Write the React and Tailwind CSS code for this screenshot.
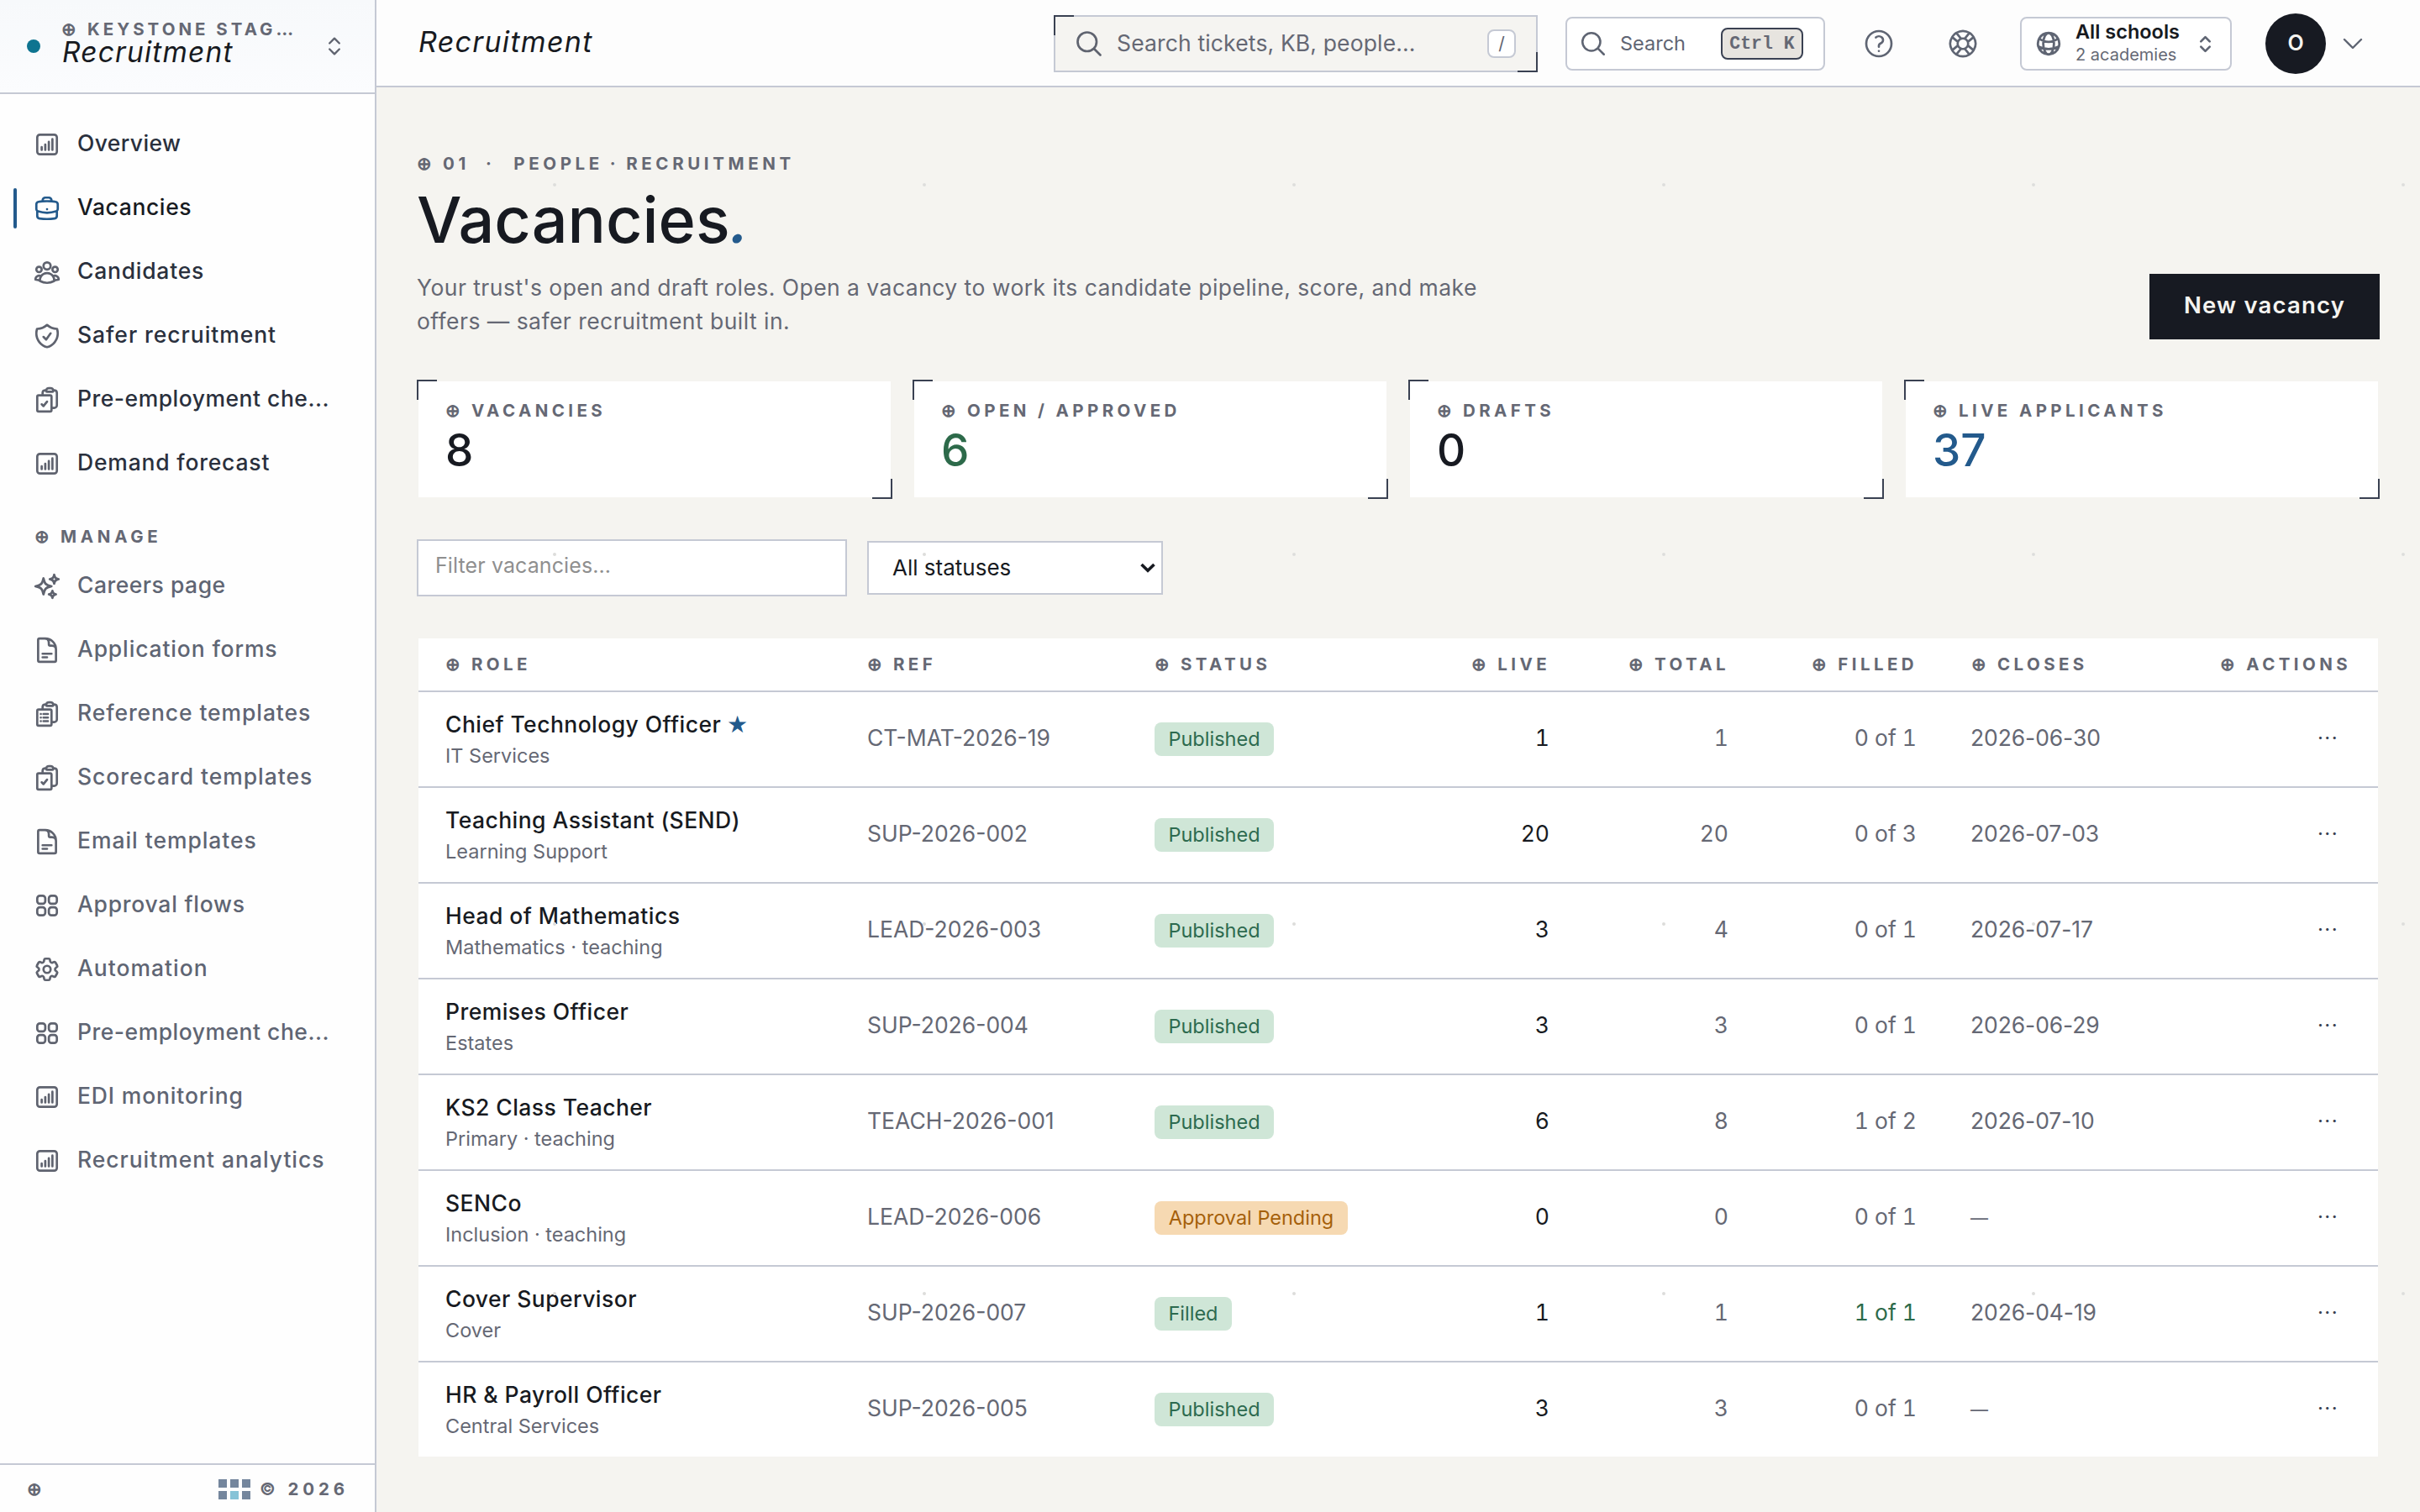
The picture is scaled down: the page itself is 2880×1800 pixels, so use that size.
import React from 'react'
import {
  HiOutlineChartBarSquare,
  HiOutlineBriefcase,
  HiOutlineUserGroup,
  HiOutlineShieldCheck,
  HiOutlineClipboardDocumentCheck,
  HiOutlineClipboardDocumentList,
  HiOutlineSparkles,
  HiOutlineDocumentText,
  HiOutlineSquares2X2,
  HiOutlineCog6Tooth,
  HiOutlineMagnifyingGlass,
  HiOutlineQuestionMarkCircle,
  HiOutlineLifebuoy,
  HiOutlineGlobeAlt,
  HiOutlineChevronDown,
} from 'react-icons/hi2'
import { ChevronsUpDown } from 'lucide-react'

const mainNav = [
  { label: 'Overview', icon: HiOutlineChartBarSquare, track: 'tracking-[0.4px]' },
  { label: 'Vacancies', icon: HiOutlineBriefcase, track: 'tracking-[0.6px]', active: true },
  { label: 'Candidates', icon: HiOutlineUserGroup, track: 'tracking-[0.75px]' },
  { label: 'Safer recruitment', icon: HiOutlineShieldCheck, track: 'tracking-[0.95px]' },
  { label: 'Pre-employment che...', icon: HiOutlineClipboardDocumentCheck, track: 'tracking-[0.5px]' },
  { label: 'Demand forecast', icon: HiOutlineChartBarSquare, track: 'tracking-[0.8px]' },
]

const manageNav = [
  { label: 'Careers page', icon: HiOutlineSparkles, track: 'tracking-[0.5px]' },
  { label: 'Application forms', icon: HiOutlineDocumentText, track: 'tracking-[0.85px]' },
  { label: 'Reference templates', icon: HiOutlineClipboardDocumentList, track: 'tracking-[0.9px]' },
  { label: 'Scorecard templates', icon: HiOutlineClipboardDocumentCheck, track: 'tracking-[0.95px]' },
  { label: 'Email templates', icon: HiOutlineDocumentText, track: 'tracking-[0.95px]' },
  { label: 'Approval flows', icon: HiOutlineSquares2X2, track: 'tracking-[0.75px]' },
  { label: 'Automation', icon: HiOutlineCog6Tooth, track: 'tracking-[1px]' },
  { label: 'Pre-employment che...', icon: HiOutlineSquares2X2, track: 'tracking-[0.5px]' },
  { label: 'EDI monitoring', icon: HiOutlineChartBarSquare, track: 'tracking-[0.85px]' },
  { label: 'Recruitment analytics', icon: HiOutlineChartBarSquare, track: 'tracking-[0.95px]' },
]

const stats = [
  { label: 'VACANCIES', value: '8', tone: 'text-[#171a21]' },
  { label: 'OPEN / APPROVED', value: '6', tone: 'text-[#2d6a4a]' },
  { label: 'DRAFTS', value: '0', tone: 'text-[#171a21]' },
  { label: 'LIVE APPLICANTS', value: '37', tone: 'text-[#235a8c]' },
]

const rows = [
  { role: 'Chief Technology Officer', star: true, dept: 'IT Services', ref: 'CT-MAT-2026-19', status: 'Published', live: 1, total: 1, filled: '0 of 1', closes: '2026-06-30' },
  { role: 'Teaching Assistant (SEND)', dept: 'Learning Support', ref: 'SUP-2026-002', status: 'Published', live: 20, total: 20, filled: '0 of 3', closes: '2026-07-03' },
  { role: 'Head of Mathematics', dept: 'Mathematics · teaching', ref: 'LEAD-2026-003', status: 'Published', live: 3, total: 4, filled: '0 of 1', closes: '2026-07-17' },
  { role: 'Premises Officer', dept: 'Estates', ref: 'SUP-2026-004', status: 'Published', live: 3, total: 3, filled: '0 of 1', closes: '2026-06-29' },
  { role: 'KS2 Class Teacher', dept: 'Primary · teaching', ref: 'TEACH-2026-001', status: 'Published', live: 6, total: 8, filled: '1 of 2', closes: '2026-07-10' },
  { role: 'SENCo', dept: 'Inclusion · teaching', ref: 'LEAD-2026-006', status: 'Approval Pending', live: 0, total: 0, filled: '0 of 1', closes: null },
  { role: 'Cover Supervisor', dept: 'Cover', ref: 'SUP-2026-007', status: 'Filled', live: 1, total: 1, filled: '1 of 1', closes: '2026-04-19', done: true },
  { role: 'HR & Payroll Officer', dept: 'Central Services', ref: 'SUP-2026-005', status: 'Published', live: 3, total: 3, filled: '0 of 1', closes: null },
]

const badge = {
  Published: 'w-[142px] bg-[#cfe6d7] text-[#2d6a4f]',
  Filled: 'w-[92px] bg-[#cfe6d7] text-[#2d6a4f]',
  'Approval Pending': 'w-[230px] bg-[#f6d9b2] text-[#a5600a]',
}

function Label({ children, track = 'tracking-[4.4px]', className = '' }) {
  return (
    <span className={`inline-flex items-center text-[20.5px] leading-[24px] font-bold whitespace-nowrap text-[#656874] ${track} ${className}`}>
      <span className="-ml-[1px] w-[31px] shrink-0 text-left font-['Roboto'] tracking-normal">⊕</span>
      {children}
    </span>
  )
}

function NavItem({ item, muted }) {
  const Icon = item.icon
  return (
    <a className="relative flex h-[72px] items-center gap-[19px] pl-[39px]">
      {item.active && <span className="absolute top-[12px] left-[16px] h-[48px] w-[4px] rounded-full bg-[#235a8c]" />}
      <Icon strokeWidth={1.9} className={`size-[34px] shrink-0 ${item.active ? 'text-[#235a8c]' : 'text-[#5f636f]'}`} />
      <span
        className={`pb-[4px] text-[26.5px] leading-[36px] font-medium whitespace-nowrap ${item.track} ${
          muted ? 'text-[#5f6573]' : item.active ? 'text-[#171a21]' : 'text-[#2a303d]'
        }`}
      >
        {item.label}
      </span>
    </a>
  )
}

function Sidebar() {
  return (
    <aside className="flex w-[448px] shrink-0 flex-col border-r-2 border-[#c5c9d4] bg-[#fefefe]">
      <div className="flex h-[112px] shrink-0 items-center border-b-2 border-[#c5c9d4] bg-gradient-to-b from-[#f7f9fb] to-[#fbfcfe] pr-[34px] pl-[32px]">
        <span className="size-[16px] shrink-0 rounded-full bg-[#0e7490]" />
        <div className="ml-[26px] flex grow flex-col pb-[10px]">
          <Label track="tracking-[4px]">KEYSTONE STAG…</Label>
          <span className="text-[33.5px] leading-[31px] tracking-[1.2px] text-[#171a21] italic">Recruitment</span>
        </div>
        <ChevronsUpDown strokeWidth={2} className="size-[28px] text-[#5f636f]" />
      </div>
      <nav className="flex grow flex-col pt-[24px]">
        <div className="flex flex-col gap-[4px]">
          {mainNav.map((n) => (
            <NavItem key={n.label} item={n} />
          ))}
        </div>
        <div className="flex h-[74px] items-center pt-[28px] pl-[42px]">
          <Label track="tracking-[4.7px]">MANAGE</Label>
        </div>
        <div className="flex flex-col gap-[4px]">
          {manageNav.map((n) => (
            <NavItem key={n.label} item={n} muted />
          ))}
        </div>
      </nav>
      <div className="flex h-[58px] shrink-0 items-center justify-between border-t-2 border-[#c5c9d4] pt-[1px] pr-[31px] pl-[33px]">
        <Label />
        <div className="flex items-center gap-[11px]">
          <div className="grid grid-cols-3 gap-[4px]">
            {[0, 1, 2, 3, 4, 5].map((i) => (
              <span key={i} className={`size-[10px] ${i === 4 ? 'bg-[#86c3d7]' : 'bg-[#74869d]'}`} />
            ))}
          </div>
          <span className="text-[20.5px] leading-[24px] font-bold tracking-[4.9px] text-[#656874]">© 2026</span>
        </div>
      </div>
    </aside>
  )
}

function TopBar() {
  return (
    <header className="flex h-[104px] shrink-0 items-center border-b-2 border-[#c5c9d4] bg-[#fdfdfd] pt-[2px] pl-[50px]">
      <span className="w-[756px] pb-[4px] text-[34px] leading-[40px] tracking-[1.3px] text-[#171a21] italic">Recruitment</span>
      <div className="relative flex h-[68px] w-[576px] items-center border-2 border-[#c5c9d4] bg-[#f5f4f1] pr-[24px] pl-[22px]">
        <span className="absolute -top-[2px] -left-[2px] size-[24px] border-t-2 border-l-2 border-[#3a4152]" />
        <span className="absolute -right-[2px] -bottom-[2px] size-[24px] border-r-2 border-b-2 border-[#3a4152]" />
        <HiOutlineMagnifyingGlass strokeWidth={1.8} className="size-[36px] text-[#5f636f]" />
        <span className="ml-[15px] grow pb-[3px] text-[26.5px] leading-[36px] tracking-[0.15px] text-[#656874]">Search tickets, KB, people...</span>
        <kbd className="flex h-[34px] w-[34px] items-center justify-center rounded-[8px] border-2 border-[#c5c9d4] bg-white font-['Inter'] text-[21px] text-[#5f636f]">/</kbd>
      </div>
      <div className="ml-[33px] flex h-[64px] w-[309px] items-center rounded-[8px] border-2 border-[#c5c9d4] bg-white pr-[24px] pl-[14px]">
        <HiOutlineMagnifyingGlass strokeWidth={1.8} className="size-[34px] text-[#5f6573]" />
        <span className="ml-[15px] grow pb-[1px] text-[23.5px] leading-[32px] text-[#5f6573]">Search</span>
        <kbd className="flex h-[38px] w-[98px] items-center justify-center rounded-[8px] border-2 border-[#3a4152] bg-[#e7e4df] font-['Liberation_Mono'] text-[21.5px] font-bold text-[#656874]">Ctrl K</kbd>
      </div>
      <HiOutlineQuestionMarkCircle strokeWidth={1.6} className="ml-[44px] size-[40px] text-[#5f6573]" />
      <HiOutlineLifebuoy strokeWidth={1.6} className="ml-[60px] size-[40px] text-[#5f6573]" />
      <div className="ml-[48px] flex h-[64px] w-[252px] items-center rounded-[8px] border-2 border-[#c5c9d4] bg-white pr-[17px] pl-[15px]">
        <HiOutlineGlobeAlt strokeWidth={2} className="size-[34px] text-[#5f6573]" />
        <div className="ml-[15px] flex grow flex-col pb-[3px]">
          <span className="text-[23.5px] leading-[28px] font-semibold whitespace-nowrap text-[#171a21]">All schools</span>
          <span className="text-[20px] leading-[26px] whitespace-nowrap text-[#656874]">2 academies</span>
        </div>
        <ChevronsUpDown strokeWidth={2.6} className="size-[25px] text-[#5f6573]" />
      </div>
      <span className="ml-[40px] flex size-[72px] items-center justify-center rounded-full bg-[#171a22] pb-[1px] text-[25px] font-semibold text-[#f5f4f0]">O</span>
      <HiOutlineChevronDown strokeWidth={1.8} className="ml-[16px] size-[32px] text-[#5f6573]" />
    </header>
  )
}

function StatCard({ stat }) {
  return (
    <div className="relative h-[142px] border-2 border-transparent bg-white bg-clip-padding pt-[23px] pl-[33px]">
      <span className="absolute -top-[2px] -left-[2px] size-[24px] border-t-2 border-l-2 border-[#3a4152]" />
      <span className="absolute -right-[2px] -bottom-[2px] size-[24px] border-r-2 border-b-2 border-[#3a4152]" />
      <div className="flex h-[24px]">
        <Label>{stat.label}</Label>
      </div>
      <div className={`mt-[5px] -ml-[1px] text-[53px] leading-[60px] font-medium ${stat.tone}`}>{stat.value}</div>
    </div>
  )
}

function Vacancies() {
  return (
    <table className="mt-[50px] ml-[2px] w-[2332px] table-fixed border-collapse bg-white text-[26.5px]">
      <colgroup>
        <col className="w-[502px]" />
        <col className="w-[342px]" />
        <col className="w-[360px]" />
        <col className="w-[175px]" />
        <col className="w-[213px]" />
        <col className="w-[224px]" />
        <col className="w-[250px]" />
        <col className="w-[266px]" />
      </colgroup>
      <thead>
        <tr className="h-[63px] border-b-2 border-[#c5c9d4] text-left leading-[24px]">
          <th className="pb-[3px] pl-[33px]"><Label className="align-middle">ROLE</Label></th>
          <th className="pb-[3px] pl-[33px]"><Label className="align-middle">REF</Label></th>
          <th className="pb-[3px] pl-[33px]"><Label className="align-middle">STATUS</Label></th>
          <th className="pr-[32px] pb-[3px] text-right"><Label className="align-middle">LIVE</Label></th>
          <th className="pr-[32px] pb-[3px] text-right"><Label className="align-middle">TOTAL</Label></th>
          <th className="pr-[32px] pb-[3px] text-right"><Label className="align-middle">FILLED</Label></th>
          <th className="pb-[3px] pl-[33px]"><Label className="align-middle">CLOSES</Label></th>
          <th className="pr-[32px] pb-[3px] text-right"><Label className="align-middle">ACTIONS</Label></th>
        </tr>
      </thead>
      <tbody>
        {rows.map((r) => (
          <tr key={r.ref} className="h-[114px] border-b-2 border-[#c5c9d4] text-[#656874] last:h-[113px] last:border-b-0">
            <td className="pl-[32px]">
              <div className="leading-[38px] font-medium tracking-[0.45px] whitespace-nowrap text-[#171a21]">
                {r.role}
                {r.star && <span className="ml-[7px] font-['Roboto'] text-[28px] leading-none text-[#235a8c]">★</span>}
              </div>
              <div className="text-[23.5px] leading-[37px]">{r.dept}</div>
            </td>
            <td className="pb-[2px] pl-[32px]">{r.ref}</td>
            <td className="pl-[32px]">
              <span className={`flex h-[40px] items-center justify-center rounded-[8px] pb-[1px] text-[23.5px] whitespace-nowrap ${badge[r.status]}`}>{r.status}</span>
            </td>
            <td className="pr-[33px] pb-[2px] text-right text-[#171a21] tabular-nums">{r.live}</td>
            <td className="pr-[33px] pb-[2px] text-right tabular-nums">{r.total}</td>
            <td className={`pr-[33px] pb-[2px] text-right tabular-nums ${r.done ? 'text-[#2d6a4a]' : ''}`}>{r.filled}</td>
            <td className="pb-[2px] pl-[31px] tracking-[-0.1px]">{r.closes ?? <span className="text-[21px]">—</span>}</td>
            <td className="pr-[47px] pb-[2px] text-right text-[24px] tracking-[1.4px] text-[#3a4152]">···</td>
          </tr>
        ))}
      </tbody>
    </table>
  )
}

export default function App() {
  return (
    <div className="flex h-[1800px] w-[2880px] overflow-hidden bg-[#f5f4f0] font-['Inter',sans-serif] text-[#171a21]">
      <Sidebar />
      <div className="relative flex grow flex-col">
        <TopBar />
        <main className="flex grow flex-col pr-[48px] pl-[48px]">
          <div className="mt-[79px] flex h-[24px] items-center pl-[1px]">
            <Label track="tracking-[4.6px]" className="whitespace-pre">
              01<span className="mr-[22px] ml-[19px]">·</span>PEOPLE<span className="mx-[8px]">·</span>RECRUITMENT
            </Label>
          </div>
          <div className="flex items-end justify-between">
            <div>
              <h1 className="mt-[10px] text-[75.5px] leading-[90px] font-medium">
                Vacancies<span className="-ml-[8px] inline-block origin-bottom -skew-x-12 text-[#235a8c]">.</span>
              </h1>
              <p className="mt-[15px] pb-[2px] text-[26.5px] leading-[40px] tracking-[0.46px] whitespace-nowrap text-[#656874]">
                Your trust's open and draft roles. Open a vacancy to work its candidate pipeline, score, and make
                <br />
                offers — safer recruitment built in.
              </p>
            </div>
            <button className="h-[78px] w-[274px] bg-[#171a22] pb-[2px] text-[27.5px] font-semibold tracking-[1.2px] text-[#f5f4f0]">New vacancy</button>
          </div>
          <div className="mt-[48px] grid grid-cols-4 gap-[24px]">
            {stats.map((s) => (
              <StatCard key={s.label} stat={s} />
            ))}
          </div>
          <div className="mt-[48px] flex items-center gap-[24px]">
            <div className="flex h-[68px] w-[512px] items-center border-2 border-[#c5c9d4] bg-white pb-[4px] pl-[20px] text-[25px] tracking-[0.1px] text-[#8f8f8f]">
              Filter vacancies...
            </div>
            <div className="flex h-[64px] w-[352px] items-center justify-between border-2 border-[#c5c9d4] bg-white pr-[7px] pl-[28px]">
              <span className="pb-[2px] text-[26px]">All statuses</span>
              <svg viewBox="0 0 18 12" className="h-[12px] w-[18px]" fill="none" stroke="#171a21" strokeWidth="3.6">
                <path d="M1.5 2 9 9.3 16.500 2" />
              </svg>
            </div>
          </div>
          <Vacancies />
        </main>
        <div className="pointer-events-none absolute inset-0 top-[104px] bg-[radial-gradient(circle_at_center,#d9d9d8_0,#e2e2e0_1.6px,transparent_2.4px)] bg-[size:440px_440px] bg-[position:-8px_-104px]" />
      </div>
    </div>
  )
}
